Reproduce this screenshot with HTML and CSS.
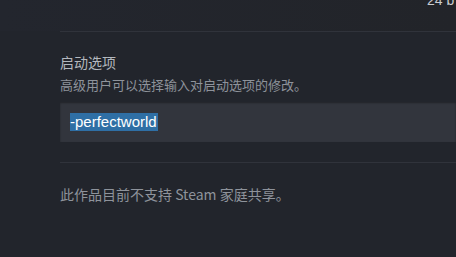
FILE: index.html
```html
<!DOCTYPE html>
<html lang="zh-CN">
<head>
    <meta charset="UTF-8">
    <title>启动选项</title>
    <link rel="stylesheet" href="styles.css">
</head>
<body>
    <div class="top-row">
        <span class="size">24 b</span>
    </div>

    <div class="panel">
        <div class="section">
            <div class="label">启动选项</div>
            <div class="hint">高级用户可以选择输入对启动选项的修改。</div>
            <div class="launch-box">
                <span class="selected">-perfectworld</span>
            </div>
        </div>

        <div class="section share">
            <div class="note">此作品目前不支持 Steam 家庭共享。</div>
        </div>
    </div>
</body>
</html>
```

FILE: styles.css
```css
body {
    margin: 0;
    background-color: #22252c;
    font-family: "Noto Sans CJK SC", "Liberation Sans", sans-serif;
    overflow: hidden;
}

.top-row {
    height: 31px;
    display: flex;
    justify-content: flex-end;
    background: linear-gradient(to right, #23262e, #222429);
}

.size {
    margin-top: -8px;
    margin-right: -4px;
    width: 33px;
    font-family: "Liberation Sans", sans-serif;
    font-size: 14px;
    color: #c9ccd0;
    white-space: nowrap;
    overflow: hidden;
}

.panel {
    padding-left: 60px;
}

.section {
    border-top: 1px solid #30333b;
}

.label {
    padding-top: 21px;
    font-size: 14px;
    line-height: 18px;
    color: #b4b8be;
}

.hint {
    margin-top: 5px;
    font-size: 13px;
    line-height: 18px;
    color: #8e939b;
}

.launch-box {
    margin-top: 8px;
    height: 40px;
    display: flex;
    align-items: center;
    padding-left: 10px;
    background-color: #32353d;
    box-shadow: inset 0 1px 2px rgba(0, 0, 0, 0.35);
    margin-bottom: 20px;
}

.selected {
    font-family: "Liberation Sans", sans-serif;
    font-size: 15px;
    line-height: 18px;
    background-color: #2f6fa5;
    color: #ffffff;
    padding-right: 1px;
}

.note {
    padding-top: 22px;
    font-size: 14px;
    line-height: 18px;
    color: #8e939b;
}
```
